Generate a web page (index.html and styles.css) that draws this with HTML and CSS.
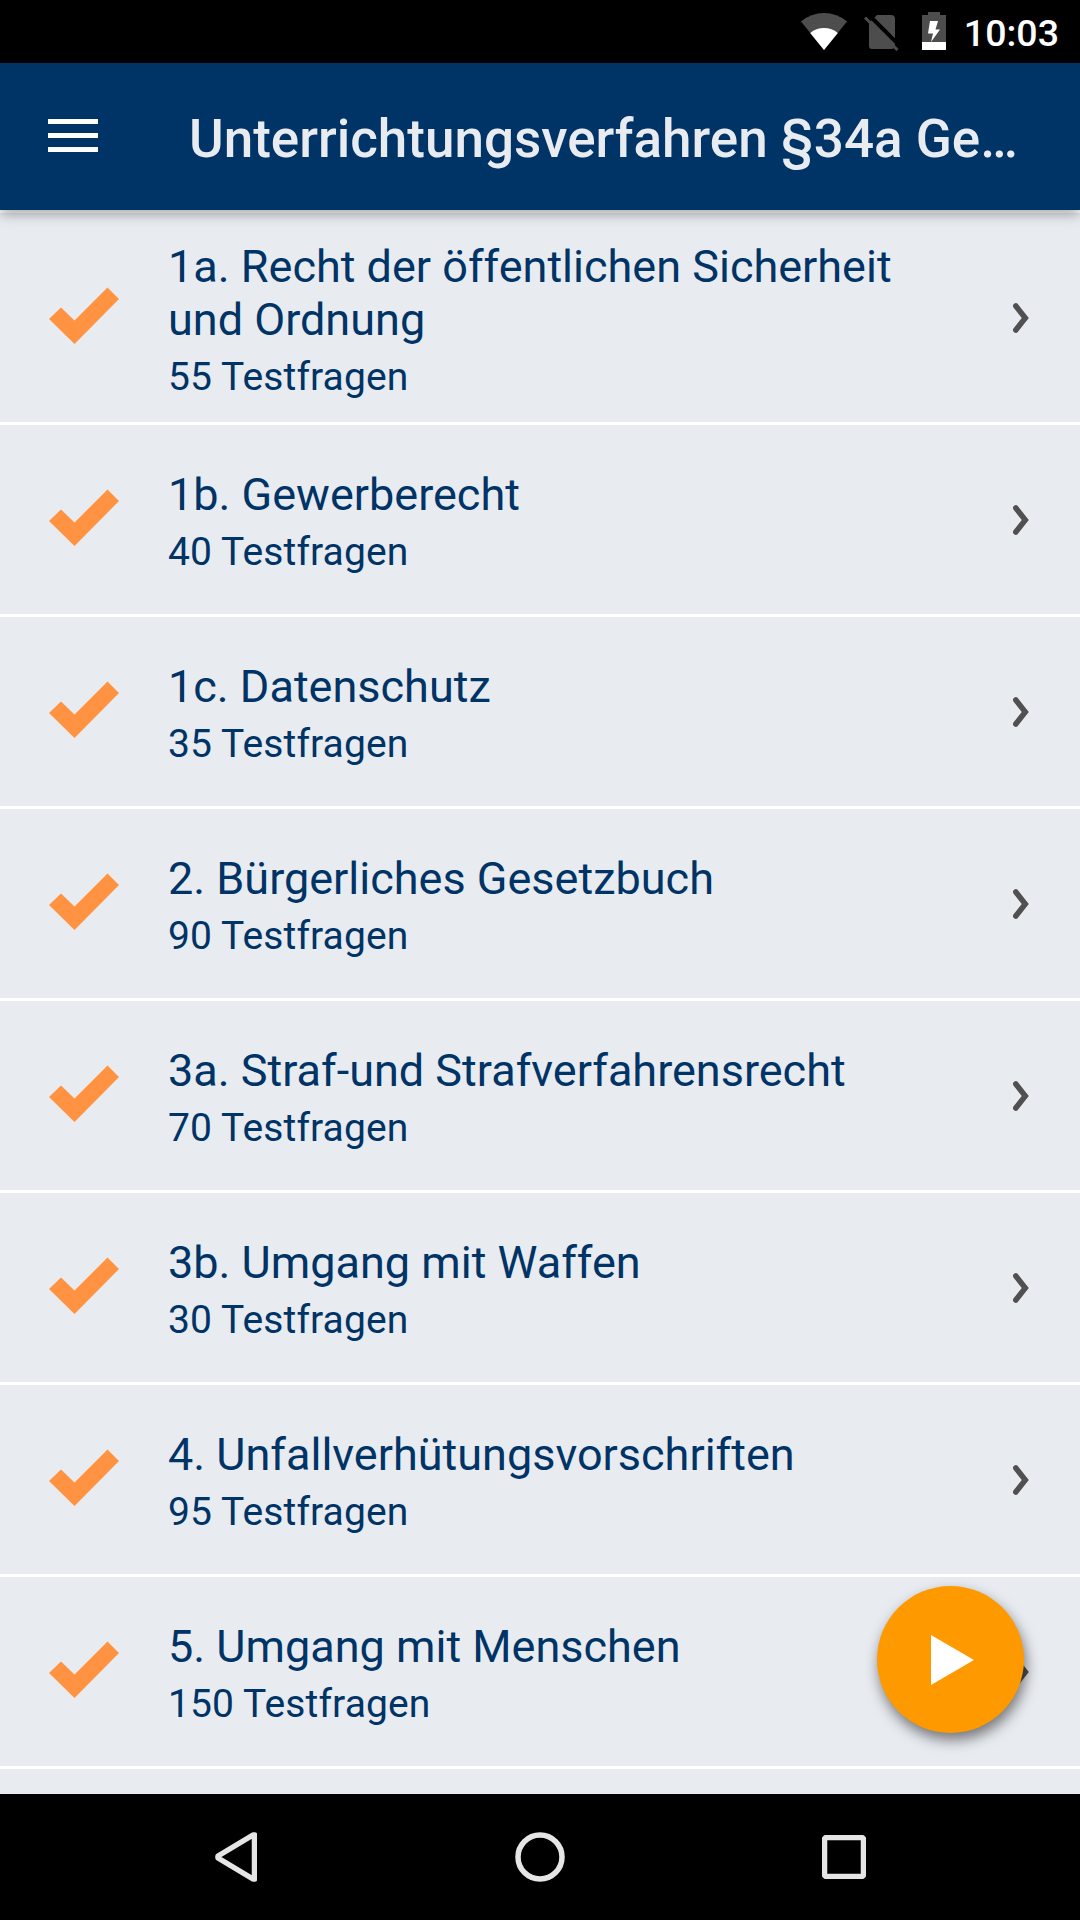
FILE: index.html
```html
<!DOCTYPE html>
<html lang="de">
<head>
    <meta charset="UTF-8">
    <title>Unterrichtungsverfahren §34a</title>
    <link rel="stylesheet" href="styles.css">
</head>
<body>
    <!-- shared icons -->
    <svg class="sprite">
        <symbol id="check" viewBox="0 0 70 58">
            <path d="M0 32 L12 20.5 L25.5 33.5 L58.5 0.5 L70 12 L25.5 57 Z"/>
        </symbol>
        <symbol id="chevron" viewBox="0 0 16 30">
            <path d="M2.8 3 L12.3 15 L2.8 27"/>
        </symbol>
    </svg>

    <div class="status-bar">
        <svg class="wifi" viewBox="0 0 46 37">
            <path fill="#4d4d4d" d="M0 8.5 Q10 0 23 0 T46 8.5 L23 37 Z"/>
            <path fill="#fff" d="M9.2 20 Q15 15 23 15 T36.8 20 L23 37 Z"/>
        </svg>
        <svg class="sim" viewBox="0 0 35 36">
            <path fill="#4d4d4d" d="M13 0 H27 Q31 0 31 4 V30 Q31 34 27 34 H8 Q5 34 5 31 V8 Z"/>
            <path stroke="#000" stroke-width="4" d="M4 -1 L37 32"/>
            <path stroke="#4d4d4d" stroke-width="3" d="M1 2.5 L33.5 35"/>
        </svg>
        <svg class="battery" viewBox="0 0 24 38">
            <path fill="#4d4d4d" d="M6 0 H18 V3 H24 V38 H0 V3 H6 Z"/>
            <path fill="#fff" d="M0 30 H24 V38 H0 Z M8 9 H16 L13.5 17.5 H18 L9 30 L11 21.5 H6 Z"/>
        </svg>
        <span class="clock">10:03</span>
    </div>

    <header class="toolbar">
        <div class="menu">
            <span></span>
            <span></span>
            <span></span>
        </div>
        <h1>Unterrichtungsverfahren §34a Ge…</h1>
    </header>

    <main class="list">
        <div class="row first">
            <svg class="check"><use href="#check"/></svg>
            <div class="text">
                <h2>1a. Recht der öffentlichen Sicherheit und Ordnung</h2>
                <p>55 Testfragen</p>
            </div>
            <svg class="chevron"><use href="#chevron"/></svg>
        </div>
        <div class="row">
            <svg class="check"><use href="#check"/></svg>
            <div class="text">
                <h2>1b. Gewerberecht</h2>
                <p>40 Testfragen</p>
            </div>
            <svg class="chevron"><use href="#chevron"/></svg>
        </div>
        <div class="row">
            <svg class="check"><use href="#check"/></svg>
            <div class="text">
                <h2>1c. Datenschutz</h2>
                <p>35 Testfragen</p>
            </div>
            <svg class="chevron"><use href="#chevron"/></svg>
        </div>
        <div class="row">
            <svg class="check"><use href="#check"/></svg>
            <div class="text">
                <h2>2. Bürgerliches Gesetzbuch</h2>
                <p>90 Testfragen</p>
            </div>
            <svg class="chevron"><use href="#chevron"/></svg>
        </div>
        <div class="row">
            <svg class="check"><use href="#check"/></svg>
            <div class="text">
                <h2>3a. Straf-und Strafverfahrensrecht</h2>
                <p>70 Testfragen</p>
            </div>
            <svg class="chevron"><use href="#chevron"/></svg>
        </div>
        <div class="row">
            <svg class="check"><use href="#check"/></svg>
            <div class="text">
                <h2>3b. Umgang mit Waffen</h2>
                <p>30 Testfragen</p>
            </div>
            <svg class="chevron"><use href="#chevron"/></svg>
        </div>
        <div class="row">
            <svg class="check"><use href="#check"/></svg>
            <div class="text">
                <h2>4. Unfallverhütungsvorschriften</h2>
                <p>95 Testfragen</p>
            </div>
            <svg class="chevron"><use href="#chevron"/></svg>
        </div>
        <div class="row">
            <svg class="check"><use href="#check"/></svg>
            <div class="text">
                <h2>5. Umgang mit Menschen</h2>
                <p>150 Testfragen</p>
            </div>
            <svg class="chevron"><use href="#chevron"/></svg>
        </div>

        <div class="fab">
            <svg viewBox="0 0 43 50"><path d="M0 0 L43 25 L0 50 Z"/></svg>
        </div>
    </main>

    <nav class="nav-bar">
        <svg class="back" viewBox="0 0 42 50"><path d="M39.5 3 V47 L38 47 L3 26 V24 L38 3 Z"/></svg>
        <svg class="home" viewBox="0 0 50 50"><circle cx="25" cy="25" r="22"/></svg>
        <svg class="recent" viewBox="0 0 44 44"><rect x="2.5" y="2.5" width="39" height="39" rx="2"/></svg>
    </nav>
</body>
</html>
```

FILE: styles.css
```css
* {
    box-sizing: border-box;
    margin: 0;
    padding: 0;
}

body {
    display: flex;
    flex-direction: column;
    width: 1080px;
    height: 1920px;
    overflow: hidden;
    background: #e8ebf0;
    font-family: Roboto, sans-serif;
}

svg {
    display: block;
    flex-shrink: 0;
    fill: none;
}

.sprite {
    position: absolute;
    width: 0;
    height: 0;
}

/* Status bar */
.status-bar {
    display: flex;
    justify-content: flex-end;
    height: 63px;
    padding-right: 21px;
    background: #000;
}

.wifi {
    width: 46px;
    height: 37px;
    margin: 13px 17px 0 0;
}

.sim {
    width: 35px;
    height: 36px;
    margin: 15px 23px 0 0;
}

.battery {
    width: 24px;
    height: 38px;
    margin: 12px 18px 0 0;
}

.clock {
    color: #fff;
    font-size: 37.5px;
    font-weight: 500;
    line-height: 66px;
}

/* Toolbar */
.toolbar {
    display: flex;
    align-items: center;
    height: 147px;
    flex-shrink: 0;
    padding-left: 48px;
    background: #003366;
    box-shadow: 0 4px 12px rgba(0, 0, 0, 0.35);
    z-index: 1;
}

.menu {
    display: flex;
    flex-direction: column;
    gap: 9px;
    width: 50px;
    margin: -2px 91px 0 0;
}

.menu span {
    height: 5px;
    background: #fff;
}

.toolbar h1 {
    padding-top: 4px;
    color: #e8ebf0;
    font-size: 53px;
    font-weight: 500;
    line-height: 62px;
    white-space: nowrap;
}

/* List */
.list {
    position: relative;
    flex: 1;
    overflow: hidden;
    border-top: 3px solid #fff;
}

.row {
    display: flex;
    align-items: center;
    height: 192px;
    padding: 0 51px 0 49px;
    border-bottom: 3px solid #fff;
}

.row.first {
    height: 212px;
}

.check {
    width: 70px;
    height: 58px;
    margin: -3px 49px 0 0;
    fill: #ff9342;
}

.text {
    flex: 1;
    padding: 4px 80px 0 0;
    color: #003366;
}

.text h2 {
    font-size: 45px;
    font-weight: 400;
    line-height: 53px;
}

.text p {
    margin-top: 8px;
    font-size: 39px;
    letter-spacing: 0.1px;
    line-height: 46px;
}

.chevron {
    width: 16px;
    height: 30px;
    stroke: #505050;
    stroke-width: 5.5;
    stroke-linecap: round;
}

/* Floating play button */
.fab {
    position: absolute;
    right: 56px;
    bottom: 61px;
    display: flex;
    align-items: center;
    justify-content: center;
    width: 147px;
    height: 147px;
    padding-left: 4px;
    border-radius: 50%;
    background: #ff9900;
    box-shadow: 2px 7px 14px rgba(0, 0, 0, 0.5);
}

.fab svg {
    width: 43px;
    height: 50px;
    fill: #fff;
}

/* Navigation bar */
.nav-bar {
    display: flex;
    align-items: center;
    height: 126px;
    padding-left: 215px;
    background: #000;
    stroke: #e6e6e6;
    stroke-width: 5.5;
    stroke-linejoin: round;
}

.back {
    width: 42px;
    height: 50px;
}

.home {
    width: 50px;
    height: 50px;
    margin: 0 257px 0 258px;
}

.recent {
    width: 44px;
    height: 44px;
}
```
